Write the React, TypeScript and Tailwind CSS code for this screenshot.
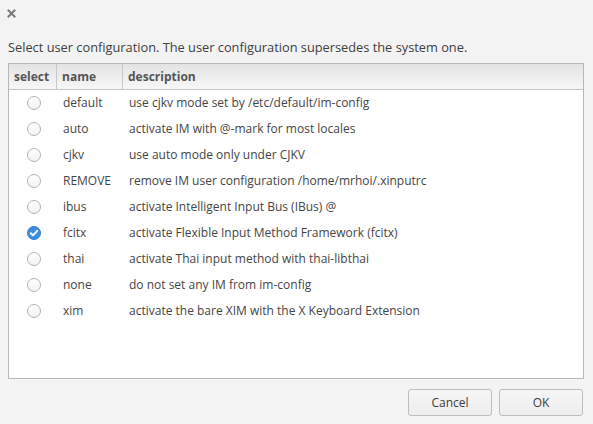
import React from "react";

const rows: [string, string][] = [
  ["default", "use cjkv mode set by /etc/default/im-config"],
  ["auto", "activate IM with @-mark for most locales"],
  ["cjkv", "use auto mode only under CJKV"],
  ["REMOVE", "remove IM user configuration /home/mrhoi/.xinputrc"],
  ["ibus", "activate Intelligent Input Bus (IBus) @"],
  ["fcitx", "activate Flexible Input Method Framework (fcitx)"],
  ["thai", "activate Thai input method with thai-libthai"],
  ["none", "do not set any IM from im-config"],
  ["xim", "activate the bare XIM with the X Keyboard Extension"],
];

function Radio({ checked }: { checked: boolean }) {
  if (checked) {
    return (
      <svg width="14" height="14" viewBox="0 0 14 14">
        <circle cx="7" cy="7" r="6.5" fill="#3d8ee0" stroke="#2f7fd0" strokeWidth="1" />
        <path d="M3.8 7.2 L6 9.4 L10.2 4.8" fill="none" stroke="#fff" strokeWidth="2" strokeLinecap="round" strokeLinejoin="round" />
      </svg>
    );
  }
  return (
    <svg width="14" height="14" viewBox="0 0 14 14">
      <defs>
        <linearGradient id="rg" x1="0" y1="0" x2="0" y2="1">
          <stop offset="0" stopColor="#ffffff" />
          <stop offset="1" stopColor="#f2f2f2" />
        </linearGradient>
      </defs>
      <circle cx="7" cy="7" r="6.5" fill="url(#rg)" stroke="#b4b4b4" strokeWidth="1" />
    </svg>
  );
}

export default function App() {
  return (
    <div
      className="w-[593px] h-[424px] bg-[#f3f3f3] flex flex-col text-[12px] text-[#3c3c3c] overflow-hidden"
      style={{ fontFamily: '"Open Sans", "Noto Sans", sans-serif' }}
    >
      <div className="h-[26px] flex items-start pl-[7px] pt-[9px]">
        <svg width="9" height="9" viewBox="0 0 9 9">
          <path d="M1.5 1.5 L7.5 7.5 M7.5 1.5 L1.5 7.5" stroke="#7a7a7a" strokeWidth="2" strokeLinecap="square" />
        </svg>
      </div>
      <div className="pl-[8px] mt-[13px] leading-[17px] text-[12.8px] text-[#404040]">
        Select user configuration. The user configuration supersedes the system one.
      </div>
      <div className="ml-[8px] mt-[7px] w-[576px] h-[316px] border border-[#b7b7b7] bg-white flex flex-col">
        <div className="h-[26px] flex border-b border-[#c4c4c4] bg-gradient-to-b from-[#e3e3e3] to-[#f7f7f7] font-bold text-[#555] leading-[25px]">
          <div className="w-[48px] pl-[5px] border-r border-[#c8c8c8]">select</div>
          <div className="w-[66px] pl-[5px] border-r border-[#c8c8c8]">name</div>
          <div className="flex-1 pl-[5px]">description</div>
        </div>
        {rows.map(([n, d]) => (
          <div key={n} className="h-[26px] flex items-center text-[#454545]">
            <div className="w-[49px] flex justify-center pl-[1px]">
              <Radio checked={n === "fcitx"} />
            </div>
            <div className="w-[66px] pl-[5px]">{n}</div>
            <div className="flex-1 pl-[5px]">{d}</div>
          </div>
        ))}
      </div>
      <div className="flex justify-end gap-[7px] pr-[10px] mt-[10px]">
        <button className="w-[84px] h-[27px] rounded-[3px] border border-[#bdbdbd] bg-gradient-to-b from-[#f6f6f6] to-[#ededed] text-[#3c3c3c]">
          Cancel
        </button>
        <button className="w-[84px] h-[27px] rounded-[3px] border border-[#bdbdbd] bg-gradient-to-b from-[#f6f6f6] to-[#ededed] text-[#3c3c3c]">
          OK
        </button>
      </div>
    </div>
  );
}
